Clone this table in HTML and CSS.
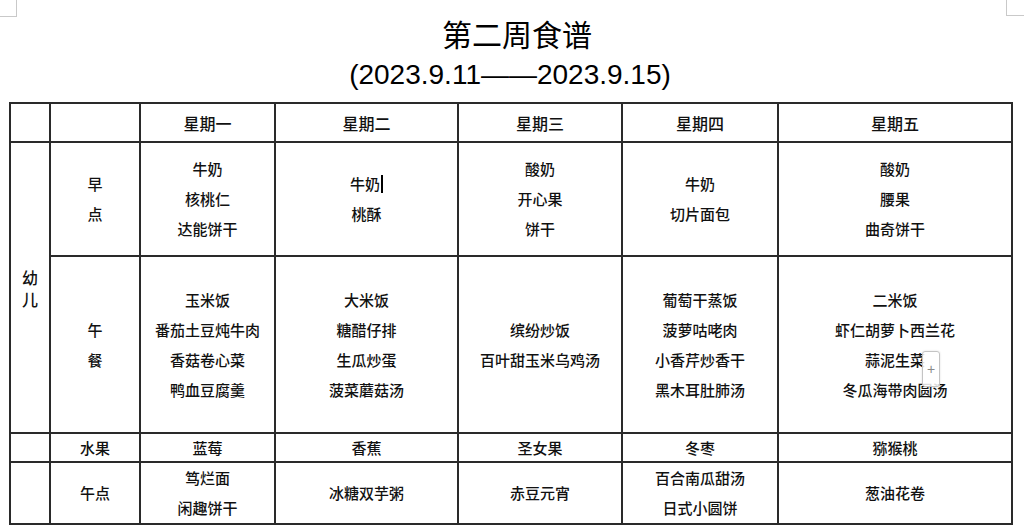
FILE: index.html
```html
<!DOCTYPE html>
<html lang="zh">
<head>
<meta charset="utf-8">
<link rel="stylesheet" href="styles.css">
</head>
<body>
<div class="corner corner-left"></div>
<div class="corner corner-right"></div>
<div class="page">
  <header class="heading">
    <h1 class="title">第二周食谱</h1>
    <p class="subtitle">(2023.9.11——2023.9.15)</p>
  </header>
  <table class="menu">
    <colgroup>
      <col class="c-group"><col class="c-label"><col class="c-mon"><col class="c-tue"><col class="c-wed"><col class="c-thu"><col class="c-fri">
    </colgroup>
    <tr class="r-head">
      <td></td><td></td>
      <td class="day">星期一</td><td class="day">星期二</td><td class="day">星期三</td><td class="day">星期四</td><td class="day">星期五</td>
    </tr>
    <tr class="r-breakfast">
      <td rowspan="2" class="group">幼<br>儿</td>
      <td>早<br>点</td>
      <td>牛奶<br>核桃仁<br>达能饼干</td>
      <td>牛奶<span class="caret"></span><br>桃酥</td>
      <td>酸奶<br>开心果<br>饼干</td>
      <td>牛奶<br>切片面包</td>
      <td>酸奶<br>腰果<br>曲奇饼干</td>
    </tr>
    <tr class="r-lunch">
      <td>午<br>餐</td>
      <td>玉米饭<br>番茄土豆炖牛肉<br>香菇卷心菜<br>鸭血豆腐羹</td>
      <td>大米饭<br>糖醋仔排<br>生瓜炒蛋<br>菠菜蘑菇汤</td>
      <td>缤纷炒饭<br>百叶甜玉米乌鸡汤</td>
      <td>葡萄干蒸饭<br>菠萝咕咾肉<br>小香芹炒香干<br>黑木耳肚肺汤</td>
      <td class="has-add"><div class="cell-wrap">二米饭<br>虾仁胡萝卜西兰花<br>蒜泥生菜<br>冬瓜海带肉圆汤<span class="add-btn">+</span></div></td>
    </tr>
    <tr class="r-fruit">
      <td></td>
      <td>水果</td>
      <td>蓝莓</td><td>香蕉</td><td>圣女果</td><td>冬枣</td><td>猕猴桃</td>
    </tr>
    <tr class="r-snack">
      <td></td>
      <td>午点</td>
      <td>笃烂面<br>闲趣饼干</td>
      <td>冰糖双芋粥</td>
      <td>赤豆元宵</td>
      <td>百合南瓜甜汤<br>日式小圆饼</td>
      <td>葱油花卷</td>
    </tr>
  </table>
</div>
</body>
</html>
```

FILE: styles.css
```css
html, body {
  margin: 0;
  padding: 0;
  background: #ffffff;
}

body {
  width: 1024px;
  height: 525px;
  overflow: hidden;
  position: relative;
  font-family: "Noto Sans CJK SC", "Liberation Sans", sans-serif;
  color: #111;
}

.corner {
  position: absolute;
  top: 0;
  width: 16px;
  height: 16px;
  border-color: #c9c9c9;
  border-style: solid;
}

.corner-left {
  left: 0;
  border-width: 0 1px 1px 0;
}

.corner-right {
  left: 1006px;
  width: 18px;
  height: 15px;
  border-width: 0 0 1px 1px;
}

.page {
  padding: 18px 13px 0 9px;
}

.heading {
  text-align: center;
  margin-bottom: 7px;
}

.title {
  margin: 0;
  padding-left: 14px;
  font-family: "Liberation Sans", "Noto Sans CJK SC", sans-serif;
  font-weight: 400;
  font-size: 30px;
  line-height: 36px;
  color: #000;
}

.subtitle {
  margin: 0;
  font-family: "Liberation Sans", "Noto Sans CJK SC", sans-serif;
  font-size: 28px;
  line-height: 41px;
  color: #000;
}

.menu {
  width: 1002px;
  table-layout: fixed;
  border-collapse: collapse;
  font-size: 15px;
  font-weight: 500;
  line-height: 30px;
}

.menu td {
  border: 2px solid #2a2a2a;
  padding: 0;
  text-align: center;
  vertical-align: middle;
}

.c-group { width: 40px; }
.c-label { width: 90px; }
.c-mon { width: 135px; }
.c-tue { width: 183px; }
.c-wed { width: 164px; }
.c-thu { width: 156px; }
.c-fri { width: 234px; }

.r-head { height: 39px; }
.r-breakfast { height: 114px; }
.r-lunch { height: 177px; }
.r-fruit { height: 29px; }
.r-fruit td { line-height: 27px; }
.r-snack { height: 60px; }

.day {
  font-size: 16px;
}

.group {
  line-height: 22px;
  font-size: 16px;
  font-weight: 500;
}

.caret {
  display: inline-block;
  width: 2px;
  height: 18px;
  background: #000;
  vertical-align: -3px;
  margin-left: 1px;
}

.cell-wrap {
  position: relative;
}

.add-btn {
  position: absolute;
  left: 143px;
  top: 66px;
  display: block;
  width: 18px;
  height: 36px;
  box-sizing: border-box;
  border: 1px solid #c4c4c4;
  border-radius: 3px;
  background: rgba(255, 255, 255, 0.85);
  box-shadow: 0 0 2px rgba(0, 0, 0, 0.15);
  color: #8a8a8a;
  font-family: "Liberation Sans", sans-serif;
  font-size: 14px;
  font-weight: 400;
  line-height: 34px;
  text-align: center;
}
```
